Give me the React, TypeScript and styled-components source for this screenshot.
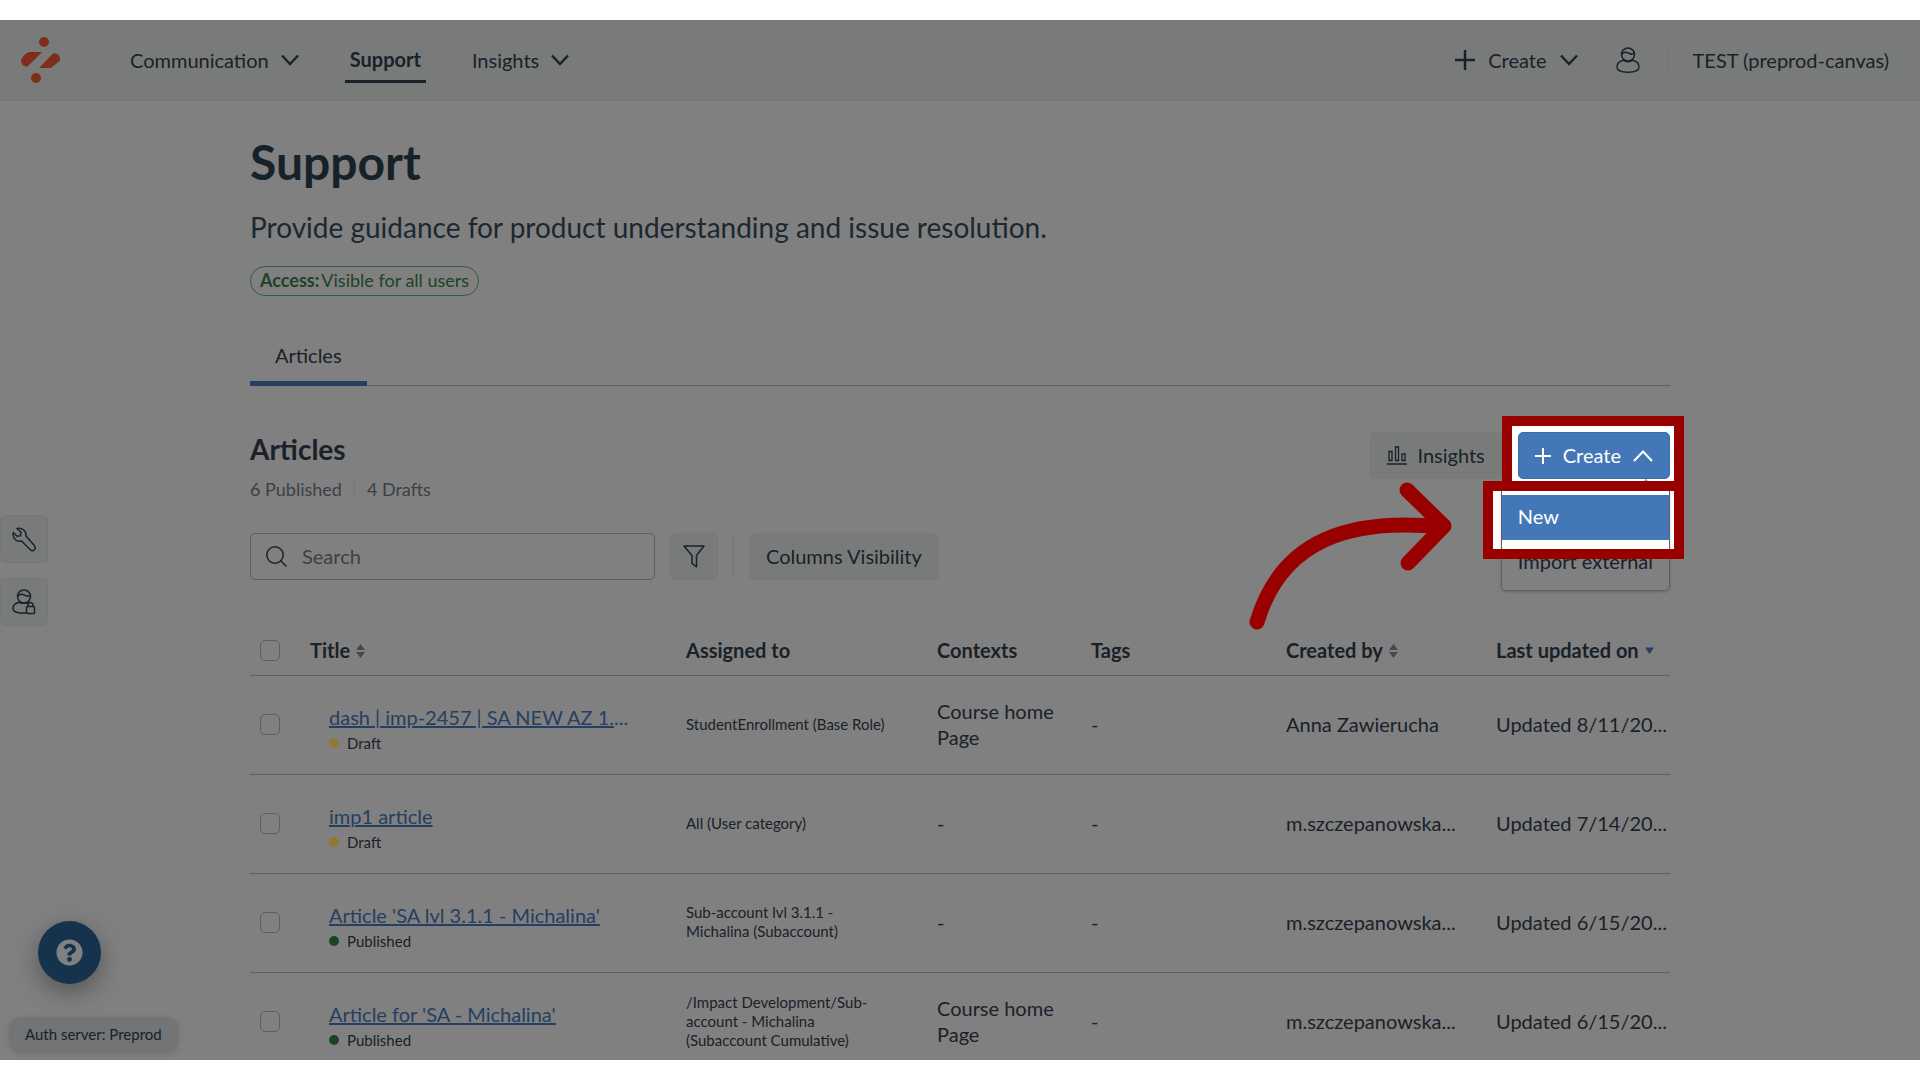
import React from 'react';
import styled, { createGlobalStyle } from 'styled-components';
import { FaQuestionCircle } from 'react-icons/fa';

const ink = '#192129';
const slate = '#15222a';
const muted = '#3b4146';
const line = '#5c5f61';
const fill = '#797b7a';
const blue = '#243f61';
const brand = '#4477b8';
const red = '#990000';

const GlobalStyle = createGlobalStyle`
  *, *::before, *::after { box-sizing: border-box; }
  html, body, #root { height: 100%; }
  body {
    margin: 0;
    background: #ffffff;
    color: ${ink};
    font-family: Lato, 'Noto Sans', sans-serif;
    font-size: 20px;
    line-height: 25px;
    overflow: hidden;
  }
  button, input { font: inherit; color: inherit; }
  h1, h2, p { margin: 0; }
`;

const Frame = styled.div`
  height: 100%;
  padding: 20px 0;
`;

const Screen = styled.div`
  position: relative;
  height: 100%;
  overflow: hidden;
  background: #808080;
`;

const Header = styled.header`
  display: flex;
  align-items: center;
  justify-content: space-between;
  height: 81px;
  padding: 0 31px 0 20px;
  background: ${fill};
  border-bottom: 1px solid #717473;
`;

const HeaderSide = styled.div`
  display: flex;
  align-items: center;
`;

const LogoLink = styled.a`
  display: flex;
  margin-right: 68px;
`;

const Nav = styled.nav`
  display: flex;
  align-items: center;
  gap: 46px;
`;

const NavButton = styled.button`
  display: flex;
  align-items: center;
  gap: 12px;
  padding: 0;
  border: 0;
  background: none;
  white-space: nowrap;
`;

const NavLink = styled.a`
  padding: 10px 5px 8px;
  border-bottom: 3px solid ${ink};
  color: ${ink};
  font-weight: 700;
  text-decoration: none;
`;

const GlobalCreate = styled.button`
  display: flex;
  align-items: center;
  gap: 13px;
  height: 46px;
  padding: 0 15px 0 17px;
  border: 1px solid #777978;
  border-radius: 5px;
  background: none;
`;

const IconButton = styled.button`
  display: flex;
  margin: 0 28px 0 22px;
  padding: 0;
  border: 0;
  background: none;
`;

const Account = styled.div`
  padding-left: 24px;
  border-left: 1px solid #727574;
  line-height: 29px;
`;

const Main = styled.main`
  margin: 0 250px;
`;

const Title = styled.h1`
  padding-top: 31px;
  color: ${slate};
  font-size: 48px;
  line-height: 60px;
`;

const Lead = styled.p`
  margin-top: 18px;
  color: #1b2831;
  font-size: 28px;
  line-height: 34px;
`;

const AccessPill = styled.div`
  display: flex;
  width: fit-content;
  gap: 2px;
  height: 30px;
  margin-top: 22px;
  padding: 0 9px;
  border: 1px solid #2f5f36;
  border-radius: 15px;
  color: #1c4424;
  font-size: 18px;
  line-height: 27px;
`;

const Tabs = styled.div`
  display: flex;
  margin-top: 34px;
  border-bottom: 1px solid ${line};
`;

const Tab = styled.button`
  height: 56px;
  margin-bottom: -1px;
  padding: 0 25px;
  border: 0;
  border-bottom: 5px solid ${blue};
  background: none;
`;

const SectionHead = styled.div`
  display: flex;
  justify-content: space-between;
  margin-top: 45px;
`;

const SectionTitle = styled.h2`
  font-size: 28px;
  line-height: 36px;
`;

const Counts = styled.div`
  display: flex;
  margin-top: 10px;
  color: ${muted};
  font-size: 18px;
  line-height: 24px;
`;

const Count = styled.span`
  & + & {
    margin-left: 12px;
    padding-left: 12px;
    border-left: 1px solid #757778;
  }
`;

const Actions = styled.div`
  display: flex;
  align-items: flex-start;
  gap: 16px;
  padding-top: 1px;
`;

const SoftButton = styled.button<{ $pad: number }>`
  display: flex;
  align-items: center;
  justify-content: center;
  gap: 10px;
  height: 47px;
  padding: 0 ${(p) => p.$pad}px;
  border: 1px solid #777978;
  border-radius: 5px;
  background: ${fill};
`;

const CreateArea = styled.div`
  position: relative;
`;

const CreateButton = styled.button`
  position: relative;
  z-index: 2;
  display: flex;
  align-items: center;
  gap: 12px;
  height: 47px;
  padding: 0 16px;
  border: 1px solid #3a6cab;
  border-radius: 5px;
  background: ${brand};
  color: #ffffff;
`;

const CreateHighlight = styled.div`
  position: absolute;
  top: -16px;
  left: -16px;
  right: -14px;
  height: 76px;
  border: 10px solid ${red};
  background: #ffffff;
`;

const MenuHighlight = styled.div`
  position: absolute;
  z-index: 4;
  top: 49px;
  right: -14px;
  width: 201px;
  height: 78px;
  border: 10px solid ${red};
`;

const MenuBackdrop = styled(MenuHighlight)`
  z-index: 1;
  background: #ffffff;
`;

const Menu = styled.div`
  position: absolute;
  z-index: 3;
  top: 54px;
  right: 0;
  padding: 8px 0 5px;
  border: 1px solid #5e6163;
  border-radius: 5px;
  box-shadow: 0 1px 3px rgba(0, 0, 0, 0.2);
  &::before {
    content: '';
    position: absolute;
    top: -6px;
    right: 18px;
    width: 10px;
    height: 10px;
    border: 1px solid #8f9294;
    border-width: 1px 0 0 1px;
    transform: rotate(45deg);
  }
`;

const MenuItem = styled.button<{ $active?: boolean }>`
  display: block;
  width: 100%;
  height: 45px;
  padding: 0 16px 2px;
  border: 0;
  background: ${(p) => (p.$active ? brand : 'none')};
  color: ${(p) => (p.$active ? '#ffffff' : ink)};
  text-align: left;
  white-space: nowrap;
`;

const Arrow = styled.svg`
  position: absolute;
  top: 46px;
  right: 216px;
  width: 210px;
  height: 160px;
  pointer-events: none;
`;

const Toolbar = styled.div`
  display: flex;
  align-items: center;
  gap: 15px;
  margin-top: 31px;
`;

const SearchBox = styled.label`
  display: flex;
  align-items: center;
  gap: 15px;
  width: 405px;
  height: 47px;
  padding: 0 15px;
  border: 1px solid ${line};
  border-radius: 5px;
`;

const SearchInput = styled.input`
  flex: 1;
  min-width: 0;
  padding: 0;
  border: 0;
  outline: 0;
  background: none;
  &::placeholder { color: ${muted}; opacity: 1; }
`;

const Divider = styled.span`
  width: 1px;
  height: 48px;
  background: #747677;
`;

const Table = styled.table`
  width: 100%;
  margin-top: 52px;
  table-layout: fixed;
  border-collapse: separate;
  border-spacing: 0;
`;

const Col = styled.col<{ $w?: number }>`
  width: ${(p) => (p.$w ? `${p.$w}px` : 'auto')};
`;

const Th = styled.th`
  height: 44px;
  padding: 0 0 6px;
  border-bottom: 1px solid ${line};
  text-align: left;
  white-space: nowrap;
`;

const Td = styled.td<{ $small?: boolean; $nowrap?: boolean }>`
  height: 99px;
  padding: 0 0 2px;
  border-bottom: 1px solid ${line};
  vertical-align: middle;
  font-size: ${(p) => (p.$small ? 15 : 20)}px;
  line-height: ${(p) => (p.$small ? 19 : 26)}px;
  white-space: ${(p) => (p.$nowrap ? 'nowrap' : 'normal')};
`;

const AssignedText = styled.div`
  max-width: 210px;
`;

const Check = styled.input`
  display: block;
  appearance: none;
  width: 20px;
  height: 21px;
  margin: 0 0 0 10px;
  border: 1px solid ${line};
  border-radius: 5px;
`;

const SortButton = styled.button`
  display: inline-flex;
  align-items: center;
  gap: 6px;
  padding: 0;
  border: 0;
  background: none;
  font-weight: 700;
`;

const Article = styled.div`
  padding: 11px 0 0 19px;
  white-space: nowrap;
`;

const ArticleLink = styled.a`
  color: ${blue};
  text-decoration: underline;
`;

const Ellipsis = styled.span`
  color: ${blue};
`;

const Status = styled.div<{ $color: string }>`
  display: flex;
  align-items: center;
  gap: 8px;
  font-size: 15px;
  &::before {
    content: '';
    width: 10px;
    height: 10px;
    border-radius: 50%;
    background: ${(p) => p.$color};
  }
`;

const SideTools = styled.aside`
  position: absolute;
  top: 495px;
  left: 0;
  display: flex;
  flex-direction: column;
  gap: 15px;
`;

const SideButton = styled.button`
  display: flex;
  align-items: center;
  justify-content: center;
  width: 48px;
  height: 48px;
  padding: 0;
  border: 1px solid #757777;
  border-radius: 5px;
  background: ${fill};
`;

const HelpButton = styled.button`
  position: absolute;
  left: 38px;
  bottom: 76px;
  display: flex;
  align-items: center;
  justify-content: center;
  width: 63px;
  height: 63px;
  padding: 0;
  border: 0;
  border-radius: 50%;
  background: #15334d;
  color: #808080;
  font-size: 27px;
  box-shadow: 0 8px 24px rgba(0, 0, 0, 0.35);
`;

const ServerBadge = styled.div`
  position: absolute;
  left: 9px;
  bottom: 9px;
  padding: 0 16px;
  border-radius: 12px;
  background: #727476;
  color: ${slate};
  font-size: 15px;
  line-height: 34px;
  box-shadow: 0 2px 6px rgba(0, 0, 0, 0.15);
`;

const Logo = () => (
  <svg width="42" height="46" viewBox="0 0 42 46" fill="#7e2e1b" aria-hidden="true">
    <circle cx="24" cy="5" r="5" />
    <circle cx="16" cy="41" r="5" />
    <path d="M10 15H22L7.5 29.5A5.5 5.5 0 0 1 1.5 22Q5 15.500 10 15Z" />
    <path d="M19 31H31L39.500 24A5.500 5.500 0 0 0 33 16.500Z" />
  </svg>
);

const Chevron = ({ up = false, size = 18, weight = 2.4 }) => (
  <svg width={size} height="12" viewBox={`0 0 ${size} 12`} fill="none" stroke="currentColor" strokeWidth={weight} aria-hidden="true">
    <path d={up ? `M1 11L${size / 2} 1.5L${size - 1} 11` : `M1 1.5L${size / 2} 10L${size - 1} 1.5`} />
  </svg>
);

const Plus = ({ size = 20, weight = 2.5 }) => (
  <svg width={size} height={size} viewBox="0 0 20 20" stroke="currentColor" strokeWidth={weight} aria-hidden="true">
    <path d="M10 0V20M0 10H20" />
  </svg>
);

const User = ({ locked = false }) => (
  <svg width="24" height="26" viewBox="0 0 24 26" fill="none" stroke="currentColor" strokeWidth="1.5" aria-hidden="true">
    <circle cx="12" cy="7.5" r="6.5" />
    <path d="M5.6 7.5C8 4.5 10.5 5 12.5 6.2S16.5 7.5 18.3 6" />
    {locked ? (
      <>
        <path d="M15 23.5C9 25 1 23.5 1 19.5C1 16 4 14 7 13.2C10 14.6 14 14.6 17 13.2" />
        <rect x="14.5" y="17.5" width="8" height="7" rx="1" />
        <path d="M16 17.5V16A2.5 2.5 0 0 1 21 16V17.5" />
      </>
    ) : (
      <path d="M7 13.2C4 14 1 16 1 20C1 23.5 6 25.2 12 25.2S23 23.5 23 20C23 16 20 14 17 13.2C14 15 10 15 7 13.2Z" />
    )}
  </svg>
);

const Wrench = () => (
  <svg width="24" height="25" viewBox="0 0 24 25" fill="none" stroke="currentColor" strokeWidth="1.5" strokeLinejoin="round" aria-hidden="true">
    <path d="M5 1.5C9 .2 14.5 3 14 9L22.3 18.5A2.8 2.8 0 0 1 18.3 22.8L9.5 14C4 15.5 .2 10.5 1.3 5.5L5 9.2L8.5 8.8L9 5.2Z" />
  </svg>
);

const Search = () => (
  <svg width="21" height="21" viewBox="0 0 21 21" fill="none" stroke="currentColor" strokeWidth="1.5" aria-hidden="true">
    <circle cx="9" cy="9" r="8.2" />
    <path d="M14.5 14.5L20.5 20.5" />
  </svg>
);

const Funnel = () => (
  <svg width="22" height="23" viewBox="0 0 22 23" fill="none" stroke="currentColor" strokeWidth="1.5" strokeLinejoin="round" aria-hidden="true">
    <path d="M1 1H21L13.5 10.5V21.8L9 18.5V10.5Z" />
  </svg>
);

const Bars = () => (
  <svg width="20" height="19" viewBox="0 0 20 19" fill="none" stroke="currentColor" strokeWidth="1.3" aria-hidden="true">
    <path d="M0 18H20M2 5.5H5V14.5H2ZM8.5 1H11.5V14.5H8.5ZM15 8H18V14.5H15Z" />
  </svg>
);

const Sort = ({ active = false }) => (
  <svg width="9" height="14" viewBox="0 0 9 14" fill={active ? blue : '#45494c'} aria-hidden="true">
    {active ? <path d="M0 3.5H9L4.5 10Z" /> : <path d="M0 6L4.5 0L9 6ZM0 8H9L4.5 14Z" />}
  </svg>
);

const statusColor = { Draft: '#907935', Published: '#1c4424' };

type Row = {
  title: string;
  cut?: boolean;
  status: 'Draft' | 'Published';
  assigned: string;
  context: string;
  author: string;
  updated: string;
};

const rows: Row[] = [
  { title: 'dash | imp-2457 | SA NEW AZ 1.', cut: true, status: 'Draft', assigned: 'StudentEnrollment (Base Role)', context: 'Course home Page', author: 'Anna Zawierucha', updated: 'Updated 8/11/20...' },
  { title: 'imp1 article', status: 'Draft', assigned: 'All (User category)', context: '-', author: 'm.szczepanowska...', updated: 'Updated 7/14/20...' },
  { title: "Article 'SA lvl 3.1.1 - Michalina'", status: 'Published', assigned: 'Sub-account lvl 3.1.1 - Michalina (Subaccount)', context: '-', author: 'm.szczepanowska...', updated: 'Updated 6/15/20...' },
  { title: "Article for 'SA - Michalina'", status: 'Published', assigned: '/Impact Development/Sub-account - Michalina (Subaccount Cumulative)', context: 'Course home Page', author: 'm.szczepanowska...', updated: 'Updated 6/15/20...' },
];

export default function App() {
  return (
    <Frame>
      <GlobalStyle />
      <Screen>
        <Header>
          <HeaderSide>
            <LogoLink href="#" aria-label="Home"><Logo /></LogoLink>
            <Nav>
              <NavButton>Communication <Chevron /></NavButton>
              <NavLink href="#support">Support</NavLink>
              <NavButton>Insights <Chevron /></NavButton>
            </Nav>
          </HeaderSide>
          <HeaderSide>
            <GlobalCreate><Plus /> Create <Chevron /></GlobalCreate>
            <IconButton aria-label="Profile"><User /></IconButton>
            <Account>TEST (preprod-canvas)</Account>
          </HeaderSide>
        </Header>

        <Main>
          <Title>Support</Title>
          <Lead>Provide guidance for product understanding and issue resolution.</Lead>
          <AccessPill><b>Access:</b> <span>Visible for all users</span></AccessPill>
          <Tabs role="tablist"><Tab role="tab" aria-selected="true">Articles</Tab></Tabs>

          <SectionHead>
            <div>
              <SectionTitle>Articles</SectionTitle>
              <Counts><Count>6 Published</Count><Count>4 Drafts</Count></Counts>
            </div>
            <Actions>
              <SoftButton $pad={16}><Bars /> Insights</SoftButton>
              <CreateArea>
                <CreateHighlight />
                <MenuBackdrop />
                <CreateButton aria-expanded="true"><Plus size={16} weight={2.5} /> Create <Chevron up size={20} weight={2} /></CreateButton>
                <Menu>
                  <MenuItem $active>New</MenuItem>
                  <MenuItem>Import external</MenuItem>
                </Menu>
                <MenuHighlight />
                <Arrow viewBox="0 0 210 160" fill="none" stroke={red} strokeWidth="15" strokeLinecap="round" strokeLinejoin="round" aria-hidden="true">
                  <path d="M13 144C38 60 108 40 198 49M163 12L200 48L164 85" />
                </Arrow>
              </CreateArea>
            </Actions>
          </SectionHead>

          <Toolbar>
            <SearchBox><Search /><SearchInput type="text" placeholder="Search" aria-label="Search" /></SearchBox>
            <SoftButton $pad={12} aria-label="Filter"><Funnel /></SoftButton>
            <Divider />
            <SoftButton $pad={16}>Columns Visibility</SoftButton>
          </Toolbar>

          <Table>
            <colgroup>
              <Col $w={60} /><Col /><Col $w={251} /><Col $w={154} /><Col $w={195} /><Col $w={210} /><Col $w={174} />
            </colgroup>
            <thead>
              <tr>
                <Th><Check type="checkbox" aria-label="Select all" /></Th>
                <Th><SortButton>Title <Sort /></SortButton></Th>
                <Th>Assigned to</Th>
                <Th>Contexts</Th>
                <Th>Tags</Th>
                <Th><SortButton>Created by <Sort /></SortButton></Th>
                <Th><SortButton>Last updated on <Sort active /></SortButton></Th>
              </tr>
            </thead>
            <tbody>
              {rows.map((r) => (
                <tr key={r.title}>
                  <Td><Check type="checkbox" aria-label={r.title} /></Td>
                  <Td>
                    <Article>
                      <ArticleLink href="#article">{r.title}</ArticleLink>{r.cut && <Ellipsis>...</Ellipsis>}
                      <Status $color={statusColor[r.status]}>{r.status}</Status>
                    </Article>
                  </Td>
                  <Td $small><AssignedText>{r.assigned}</AssignedText></Td>
                  <Td>{r.context}</Td>
                  <Td>-</Td>
                  <Td $nowrap>{r.author}</Td>
                  <Td $nowrap>{r.updated}</Td>
                </tr>
              ))}
            </tbody>
          </Table>
        </Main>

        <SideTools>
          <SideButton aria-label="Tools"><Wrench /></SideButton>
          <SideButton aria-label="User access"><User locked /></SideButton>
        </SideTools>
        <HelpButton aria-label="Help"><FaQuestionCircle /></HelpButton>
        <ServerBadge>Auth server: Preprod</ServerBadge>
      </Screen>
    </Frame>
  );
}
